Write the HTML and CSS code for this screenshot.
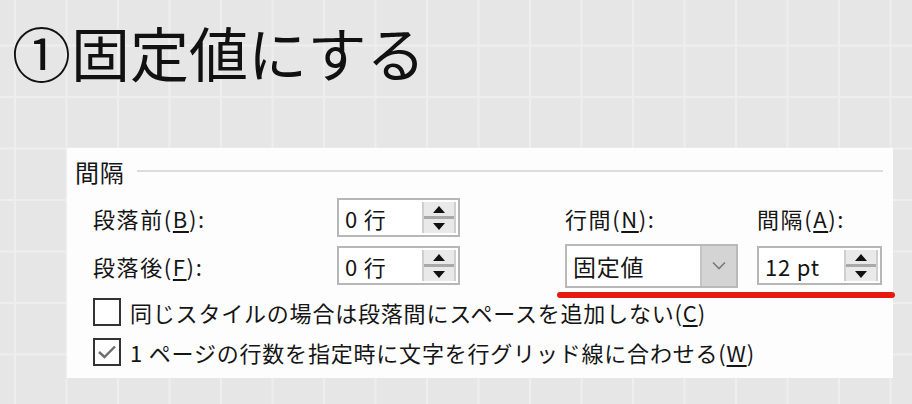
FILE: index.html
```html
<!DOCTYPE html>
<html lang="ja">
<head>
    <meta charset="UTF-8">
    <meta name="viewport" content="width=device-width, initial-scale=1.0">
    <title>固定値にする</title>
    <link rel="stylesheet" href="styles.css">
</head>
<body>
    <h1 class="title">①固定値にする</h1>

    <div class="panel">
        <div class="group-head">
            <span>間隔</span>
            <span class="group-line"></span>
        </div>

        <div class="spacing-grid">
            <label class="field-label">段落前(<u>B</u>):</label>
            <div class="spin">
                <span class="spin-value">0 行</span>
                <span class="spin-btns"><span class="arrow-up"></span><span class="arrow-down"></span></span>
            </div>
            <label class="field-label">行間(<u>N</u>):</label>
            <label class="field-label">間隔(<u>A</u>):</label>

            <label class="field-label">段落後(<u>F</u>):</label>
            <div class="spin">
                <span class="spin-value">0 行</span>
                <span class="spin-btns"><span class="arrow-up"></span><span class="arrow-down"></span></span>
            </div>
            <div class="combo">
                <span class="combo-value">固定値</span>
                <span class="combo-btn">
                    <svg width="14" height="9" viewBox="0 0 14 9"><path d="M1 1.5 L7 7.5 L13 1.5" fill="none" stroke="#7a7a7a" stroke-width="1.6"/></svg>
                </span>
            </div>
            <div class="spin spin-pt">
                <span class="spin-value">12 pt</span>
                <span class="spin-btns"><span class="arrow-up"></span><span class="arrow-down"></span></span>
            </div>
        </div>

        <div class="check-row">
            <span class="checkbox"></span>
            <span>同じスタイルの場合は段落間にスペースを追加しない(<u>C</u>)</span>
        </div>
        <div class="check-row">
            <span class="checkbox">
                <svg width="20" height="16" viewBox="0 0 20 16"><path d="M2 8 L7.5 13 L18 2.5" fill="none" stroke="#6e6e6e" stroke-width="2.4"/></svg>
            </span>
            <span>1 ページの行数を指定時に文字を行グリッド線に合わせる(<u>W</u>)</span>
        </div>

        <!-- red marker under the line spacing controls -->
        <span class="marker"></span>
    </div>
</body>
</html>
```

FILE: styles.css
```css
* {
    margin: 0;
    padding: 0;
    box-sizing: border-box;
}

body {
    font-family: "Noto Sans CJK JP", "Noto Sans", sans-serif;
    color: #151515;
    background-color: #e6e6e6;
    background-image:
        linear-gradient(to right, #eeeeee 2px, transparent 2px),
        linear-gradient(to bottom, #eeeeee 2px, transparent 2px);
    background-size: 51.5px 51.5px;
    background-position: 14px -7px;
    height: 404px;
    overflow: hidden;
}

.title {
    font-size: 59px;
    font-weight: 400;
    line-height: 59px;
    padding: 22px 0 0 12px;
    color: #111;
}

.panel {
    position: relative;
    margin: 67px 0 0 67px;
    width: 826px;
    height: 230px;
    background: #fdfdfd;
    padding: 8px 10px 0 8px;
    font-size: 22px;
    letter-spacing: 0.8px;
}

.group-head {
    display: flex;
    align-items: center;
    height: 30px;
    font-size: 24px;
}

.group-line {
    flex: 1;
    height: 2px;
    background: #dcdcdc;
    margin-left: 12px;
}

.spacing-grid {
    display: grid;
    grid-template-columns: 244px 228px 192px 125px;
    grid-template-rows: 39px 39px;
    row-gap: 9px;
    align-items: center;
    margin: 12px 0 0 18px;
}

.field-label {
    line-height: 1;
    letter-spacing: 1.6px;
}

.field-label u,
.check-row u {
    text-underline-offset: 3px;
}

.spin {
    display: flex;
    width: 123px;
    height: 39px;
    border: 2px solid #b7b7b7;
    background: #fff;
}

.spin-pt {
    width: 125px;
}

.spin-value {
    flex: 1;
    display: flex;
    align-items: center;
    padding-left: 6px;
}

.spin-btns {
    width: 34px;
    display: flex;
    flex-direction: column;
    background: #e9e9e9;
    border-left: 2px solid #cfcfcf;
    border-right: 2px solid #cfcfcf;
    margin: 2px 2px 2px 0;
}

.arrow-up,
.arrow-down {
    flex: 1;
    display: flex;
    align-items: center;
    justify-content: center;
}

.arrow-up {
    border-bottom: 3px solid #a9a9a9;
}

.arrow-up::before {
    content: "";
    border-left: 6px solid transparent;
    border-right: 6px solid transparent;
    border-bottom: 7px solid #111;
}

.arrow-down::before {
    content: "";
    border-left: 6px solid transparent;
    border-right: 6px solid transparent;
    border-top: 7px solid #111;
}

.combo {
    display: flex;
    width: 173px;
    height: 44px;
    border: 2px solid #b9b9b9;
    background: #fff;
}

.combo-value {
    flex: 1;
    display: flex;
    align-items: center;
    padding-left: 6px;
    font-size: 23px;
}

.combo-btn {
    width: 36px;
    display: flex;
    align-items: center;
    justify-content: center;
    background: #d4d4d4;
    border-left: 2px solid #c4c4c4;
}

.check-row {
    display: flex;
    align-items: center;
    gap: 9px;
    height: 28px;
    margin: 13px 0 0 18px;
    line-height: 1;
}

.check-row + .check-row {
    margin-top: 12px;
}

.checkbox {
    width: 28px;
    height: 28px;
    border: 2px solid #333;
    background: #fff;
    display: flex;
    align-items: center;
    justify-content: center;
}

.marker {
    position: absolute;
    left: 490px;
    top: 144px;
    width: 338px;
    height: 6px;
    border-radius: 3px;
    background: #e8190e;
}
```
